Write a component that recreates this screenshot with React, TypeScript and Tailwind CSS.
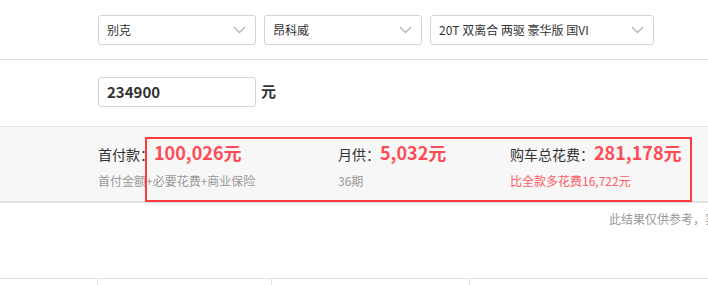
import React from 'react'

const font = { fontFamily: '"Noto Sans CJK SC", "Noto Sans", sans-serif' }

function Chevron() {
  return (
    <svg width="13" height="8" viewBox="0 0 13 8" fill="none" className="shrink-0">
      <path d="M1 1l5.5 5.5L12 1" stroke="#b5b5b5" strokeWidth="1.3" />
    </svg>
  )
}

function Select({ value, width }: { value: string; width: string }) {
  return (
    <div className={`${width} h-[30px] flex items-center justify-between pl-[8px] pr-[9px] border border-[#d4d4d4] rounded-[3px] bg-white text-[12px] text-[#333]`}>
      <span className="truncate">{value}</span>
      <Chevron />
    </div>
  )
}

function Stat({ label, value, note, noteRed }: { label: string; value: string; note: string; noteRed?: boolean }) {
  return (
    <div>
      <div className="flex items-baseline h-[26px]">
        <span className="text-[14px] text-[#333]">{label}</span>
        <span className="text-[18px] font-bold text-[#ff4b55] leading-none">{value}</span>
      </div>
      <p className={`text-[12px] mt-[3px] ${noteRed ? 'text-[#ff5a64]' : 'text-[#999]'}`}>{note}</p>
    </div>
  )
}

export default function App() {
  return (
    <div className="relative w-[708px] h-[285px] overflow-hidden bg-white" style={font}>
      {/* car select row */}
      <div className="h-[60px] flex items-start pt-[15px] pl-[98px] gap-[8px] border-b border-[#e0e0e0]">
        <Select value="别克" width="w-[158px]" />
        <Select value="昂科威" width="w-[158px]" />
        <Select value="20T 双离合 两驱 豪华版 国VI" width="w-[224px]" />
      </div>

      {/* price row */}
      <div className="h-[67px] flex items-start pt-[17px] pl-[98px] border-b border-[#e4e4e4]">
        <div className="w-[158px] h-[30px] flex items-center px-[8px] border border-[#d4d4d4] rounded-[3px] text-[15px] font-bold text-[#333]">
          234900
        </div>
        <span className="ml-[5px] mt-[3px] text-[15px] font-bold text-[#333]">元</span>
      </div>

      {/* result band */}
      <div className="h-[76px] bg-[#f7f7f7] border-b-2 border-[#e2e2e2] flex pt-[16px] pl-[98px]">
        <div className="w-[240px]">
          <Stat label="首付款：" value="100,026元" note="首付金额+必要花费+商业保险" />
        </div>
        <div className="w-[172px]">
          <Stat label="月供：" value="5,032元" note="36期" />
        </div>
        <div>
          <Stat label="购车总花费：" value="281,178元" note="比全款多花费16,722元" noteRed />
        </div>
      </div>

      <p className="pl-[609px] pt-[7px] whitespace-nowrap text-[12px] text-[#999]">此结果仅供参考，实际费用以当地为准</p>

      {/* table head */}
      <div className="absolute left-0 right-0 top-[278px] h-[20px] flex border-t border-[#e2e2e2]">
        <div className="w-[97px]" />
        <div className="w-[174px] border-l border-[#e2e2e2]" />
        <div className="w-[198px] border-l border-[#e2e2e2]" />
        <div className="flex-1 border-l border-[#e2e2e2]" />
      </div>

      {/* highlight annotation */}
      <div className="absolute left-[145px] top-[137px] w-[547px] h-[65px] border-2 border-[#ff3b3b] pointer-events-none" />
    </div>
  )
}
